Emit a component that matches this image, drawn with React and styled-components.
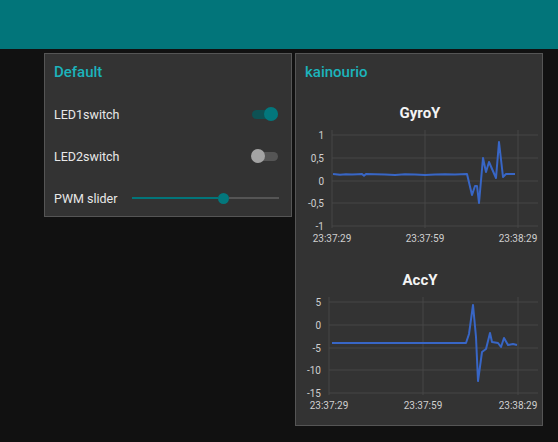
import React from 'react';
import styled, { createGlobalStyle } from 'styled-components';

const GlobalStyle = createGlobalStyle`
  html, body {
    margin: 0;
    padding: 0;
    background: #111111;
    font-family: Roboto, "Liberation Sans", sans-serif;
  }
`;

const Page = styled.div`
  width: 558px;
  height: 442px;
  background: #111111;
  overflow: hidden;
`;

const Header = styled.div`
  height: 49px;
  background: #02757a;
`;

const Main = styled.div`
  display: flex;
  align-items: flex-start;
  gap: 3px;
  padding: 4px 0 0 44px;
`;

const Card = styled.div`
  width: 248px;
  box-sizing: border-box;
  border: 1px solid #555555;
  background: #333333;
  display: flex;
  flex-direction: column;
  gap: 6px;
  padding-bottom: ${(p) => p.$pad || 0}px;
`;

const CardTitle = styled.div`
  height: 36px;
  display: flex;
  align-items: center;
  padding-left: 9px;
  color: #1cb4bc;
  font-size: 15px;
  font-weight: 500;
`;

const Row = styled.div`
  height: 36px;
  display: flex;
  align-items: center;
  justify-content: space-between;
  padding: 0 12px 0 9px;
`;

const Label = styled.span`
  color: #e8e8e8;
  font-size: 12.5px;
`;

const ToggleTrack = styled.div`
  position: relative;
  width: 26px;
  height: 9px;
  margin-right: 1px;
  border-radius: 5px;
  background: ${(p) => (p.$on ? '#0e5153' : '#555555')};
`;

const ToggleKnob = styled.div`
  position: absolute;
  top: -3px;
  ${(p) => (p.$on ? 'right: 0;' : 'left: -1px;')}
  width: 14px;
  height: 14px;
  border-radius: 50%;
  background: ${(p) => (p.$on ? '#03777c' : '#a3a3a3')};
`;

const SliderBox = styled.div`
  flex: 1;
  display: flex;
  align-items: center;
  margin-left: 15px;
  height: 12px;
`;

const SliderLine = styled.div`
  height: 2px;
  background: ${(p) => (p.$filled ? '#02757a' : '#555555')};
  flex: ${(p) => p.$grow};
`;

const Thumb = styled.div`
  width: 11px;
  height: 11px;
  border-radius: 50%;
  background: #03777c;
  flex: none;
`;

const ChartBlock = styled.div`
  display: flex;
  flex-direction: column;
`;

const ChartTitle = styled.div`
  height: 34px;
  display: flex;
  align-items: center;
  justify-content: center;
  color: #f4f4f4;
  font-size: 15px;
  font-weight: 700;
  padding-left: 2px;
`;

const Plot = styled.svg`
  display: block;
  width: 246px;
  height: 127px;
  overflow: visible;
  font-family: Roboto, "Liberation Sans", sans-serif;
  font-size: 10px;
`;

function Toggle({ on }) {
  return (
    <ToggleTrack $on={on}>
      <ToggleKnob $on={on} />
    </ToggleTrack>
  );
}

function Slider({ value }) {
  return (
    <SliderBox>
      <SliderLine $filled $grow={value} />
      <Thumb />
      <SliderLine $grow={100 - value} />
    </SliderBox>
  );
}

const hLines = [5, 28, 51, 73, 96];

function Chart({ title, origin, yLabels, labelRight, vLines, points }) {
  const [ox, oy] = origin;
  const pts = points.map(([x, y]) => `${x - ox},${y - oy}`).join(' ');
  const times = ['23:37:29', '23:37:59', '23:38:29'];
  return (
    <ChartBlock>
      <ChartTitle>{title}</ChartTitle>
      <Plot viewBox="0 0 246 127">
        {hLines.map((y) => (
          <line key={'h' + y} x1={vLines[0]} x2={242} y1={y} y2={y} stroke="#474747" strokeWidth="1" />
        ))}
        {vLines.map((x) => (
          <line key={'v' + x} x1={x} x2={x} y1={0} y2={98} stroke="#474747" strokeWidth="1" />
        ))}
        {yLabels.map((t, i) => (
          <text key={t} x={labelRight} y={hLines[i] + 3.5} textAnchor="end" fill="#cfcfcf">
            {t}
          </text>
        ))}
        {vLines.map((x, i) => (
          <text key={times[i]} x={x} y={112} textAnchor="middle" fill="#cfcfcf">
            {times[i]}
          </text>
        ))}
        <polyline points={pts} fill="none" stroke="#3866c6" strokeWidth="2" strokeLinejoin="round" />
      </Plot>
    </ChartBlock>
  );
}

const gyroPoints = [
  [333, 174], [340, 174.8], [346, 174.2], [352, 174.6], [358, 174.2], [362, 174],
  [364, 175.8], [366, 174], [375, 174.2], [385, 174.6], [395, 175], [405, 174.3],
  [415, 174.6], [425, 175], [435, 174.5], [445, 174.2], [455, 174.6], [467, 174],
  [472, 195], [475, 186], [477, 186], [479, 203], [483, 158], [486, 172], [489, 162],
  [496, 178], [499, 142], [503, 177], [506, 174], [515, 174],
];

const accPoints = [
  [332, 343], [466, 343], [469, 334], [473, 305], [476, 337], [478, 381], [482, 352],
  [486, 349], [490, 333], [492, 342], [498, 343], [501, 347], [504, 338], [508, 345],
  [513, 344], [517, 345],
];

export default function App() {
  return (
    <Page>
      <GlobalStyle />
      <Header />
      <Main>
        <Card>
          <CardTitle>Default</CardTitle>
          <Row>
            <Label>LED1switch</Label>
            <Toggle on />
          </Row>
          <Row>
            <Label>LED2switch</Label>
            <Toggle on={false} />
          </Row>
          <Row>
            <Label>PWM slider</Label>
            <Slider value={63} />
          </Row>
        </Card>
        <Card $pad={1}>
          <CardTitle>kainourio</CardTitle>
          <Chart
            title="GyroY"
            origin={[296, 130]}
            yLabels={['1', '0,5', '0', '-0,5', '-1']}
            labelRight={28}
            vLines={[36, 129, 222]}
            points={gyroPoints}
          />
          <Chart
            title="AccY"
            origin={[296, 297]}
            yLabels={['5', '0', '-5', '-10', '-15']}
            labelRight={25}
            vLines={[33, 127, 222]}
            points={accPoints}
          />
        </Card>
      </Main>
    </Page>
  );
}
